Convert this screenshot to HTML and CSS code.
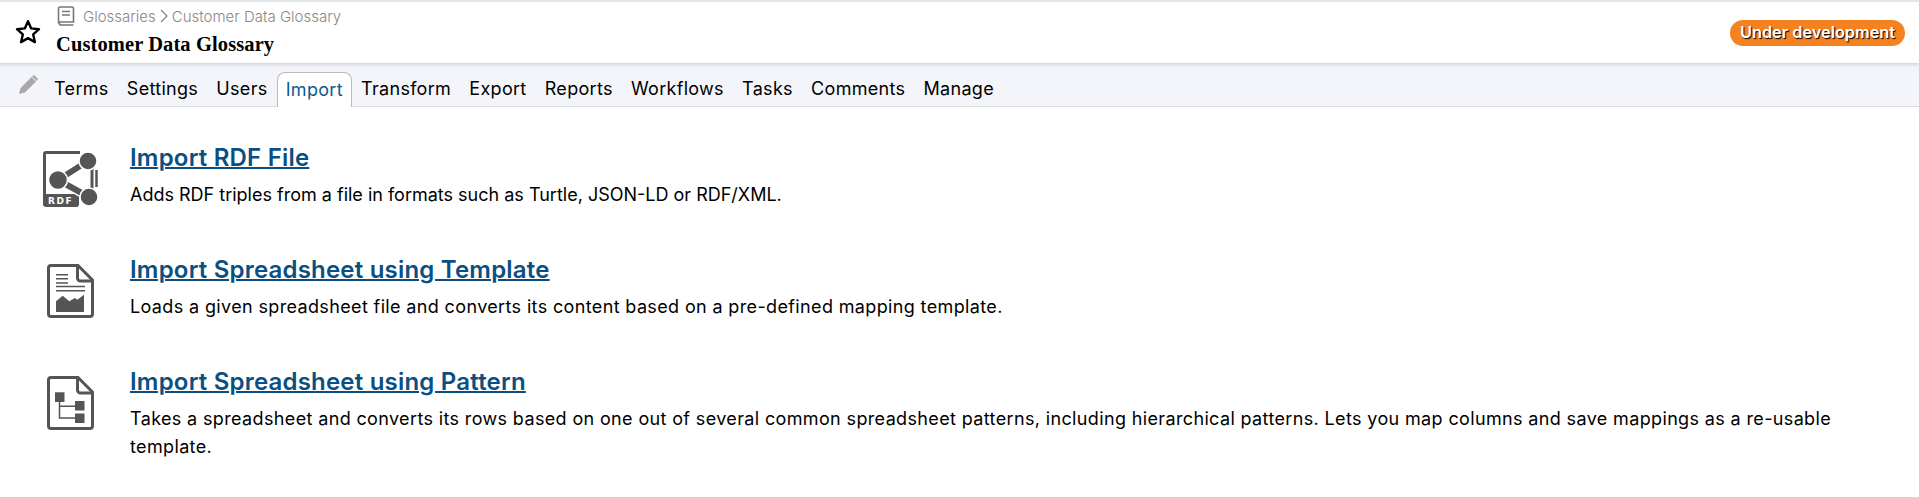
FILE: index.html
```html
<!DOCTYPE html>
<html lang="en">
<head>
  <meta charset="UTF-8" />
  <title>Customer Data Glossary - Import</title>
  <link rel="stylesheet" href="styles.css">
</head>
<body>
  <header class="page-header">
    <div class="star-box">
      <svg width="28" height="28" viewBox="0 0 28 28"><path d="M14 3.200l3.200 7.200 7.800.8-5.800 5.200 1.700 7.700L14 20.100l-6.900 4 1.700-7.700L3 11.200l7.800-.8z" fill="none" stroke="#000" stroke-width="2.400" stroke-linejoin="round"/></svg>
    </div>
    <div class="title-box">
      <div class="crumbs">
        <svg class="book" width="18" height="20" viewBox="0 0 18 20"><path d="M3 1h12a1.500 1.500 0 0 1 1.500 1.500V16H3.200a1.800 1.800 0 0 0 0 3h13.300M1.500 17.500V2.500A1.500 1.500 0 0 1 3 1M5 5.500h8M5 9h8" fill="none" stroke="#777" stroke-width="1.600"/></svg>
        <span>Glossaries</span>
        <svg class="chev" width="8" height="14" viewBox="0 0 8 14"><path d="M1 1l6 6-6 6" fill="none" stroke="#888" stroke-width="1.300"/></svg>
        <span>Customer Data Glossary</span>
      </div>
      <h1>Customer Data Glossary</h1>
    </div>
    <span class="status-badge">Under development</span>
  </header>

  <nav class="tab-bar">
    <svg class="pencil" width="22" height="22" viewBox="0 0 22 22"><path d="M2 20l1.500-6L14.500 3l4.500 4.500L8 18.500zM15.800 1.800a1.500 1.500 0 0 1 2.100 0l2.300 2.300a1.500 1.500 0 0 1 0 2.100l-.7.7-4.400-4.400z" fill="#a9a9a9"/></svg>
    <a class="tab">Terms</a>
    <a class="tab">Settings</a>
    <a class="tab">Users</a>
    <a class="tab active">Import</a>
    <a class="tab">Transform</a>
    <a class="tab">Export</a>
    <a class="tab">Reports</a>
    <a class="tab">Workflows</a>
    <a class="tab">Tasks</a>
    <a class="tab">Comments</a>
    <a class="tab">Manage</a>
  </nav>

  <main class="import-list">
    <section class="import-item">
      <svg class="item-icon" width="60" height="60" viewBox="0 0 60 60">
        <path d="M40 4.500H6a1.500 1.500 0 0 0-1.500 1.500v50A1.500 1.500 0 0 0 6 57.500h32" fill="none" stroke="#555" stroke-width="3"/>
        <rect x="3" y="46" width="36" height="12" rx="1.500" fill="#555"/>
        <path d="M56.500 22v17" stroke="#555" stroke-width="2.500"/>
        <path d="M18 32L48 13M18 32L49 49" stroke="#fff" stroke-width="9"/>
        <path d="M18 32L48 13M18 32L49 49" stroke="#555" stroke-width="6"/>
        <path d="M52 14v34" stroke="#555" stroke-width="3"/>
        <circle cx="48" cy="13" r="9" fill="#555" stroke="#fff" stroke-width="1.500"/>
        <circle cx="18" cy="32" r="9.500" fill="#555" stroke="#fff" stroke-width="1.500"/>
        <circle cx="49" cy="49" r="9" fill="#555" stroke="#fff" stroke-width="1.500"/>
        <text x="8" y="56" class="rdf-label">RDF</text>
      </svg>
      <div>
        <h2><a>Import RDF File</a></h2>
        <p>Adds RDF triples from a file in formats such as Turtle, JSON-LD or RDF/XML.</p>
      </div>
    </section>
    <section class="import-item">
      <svg class="item-icon" width="60" height="60" viewBox="0 0 60 60">
        <path d="M11 5.500h27L52.500 20v34a2.500 2.500 0 0 1-2.500 2.500H11A2.500 2.500 0 0 1 8.500 54V8A2.500 2.500 0 0 1 11 5.500z" fill="none" stroke="#555" stroke-width="3"/>
        <path d="M37.500 6v12a3 3 0 0 0 3 3H52" fill="none" stroke="#555" stroke-width="3"/>
        <path d="M16 14.700h12M16 18.700h12M16 23h12M16 26.500h29M16 30.700h29" stroke="#555" stroke-width="1.500"/>
        <path d="M16 41.300l6.700-5.600 6.600 5.600 5.700-3.300 2.300 1.700 6.700-5v17.300H16z" fill="#555"/>
      </svg>
      <div>
        <h2><a>Import Spreadsheet using Template</a></h2>
        <p class="wide">Loads a given spreadsheet file and converts its content based on a pre-defined mapping template.</p>
      </div>
    </section>
    <section class="import-item">
      <svg class="item-icon" width="60" height="60" viewBox="0 0 60 60">
        <path d="M11 5.500h27L52.500 20v34a2.500 2.500 0 0 1-2.500 2.500H11A2.500 2.500 0 0 1 8.500 54V8A2.500 2.500 0 0 1 11 5.500z" fill="none" stroke="#555" stroke-width="3"/>
        <path d="M37.500 6v12a3 3 0 0 0 3 3H52" fill="none" stroke="#555" stroke-width="3"/>
        <rect x="15" y="20.300" width="9.500" height="9.700" fill="#555"/>
        <rect x="35" y="29" width="9.500" height="9.500" fill="#555"/>
        <rect x="35" y="41.500" width="9.500" height="9.500" fill="#555"/>
        <path d="M19.500 30v16H35M19.500 34.300H35" fill="none" stroke="#555" stroke-width="1.500"/>
      </svg>
      <div>
        <h2><a>Import Spreadsheet using Pattern</a></h2>
        <p class="wide">Takes a spreadsheet and converts its rows based on one out of several common spreadsheet patterns, including hierarchical patterns. Lets you map columns and save mappings as a re-usable template.</p>
      </div>
    </section>
  </main>
</body>
</html>
```

FILE: styles.css
```css
body {
  margin: 0;
  background: #fff;
  color: #000;
  font-family: Inter, 'Liberation Sans', sans-serif;
  font-weight: 400;
}
.page-header {
  display: flex;
  align-items: flex-start;
  height: 61px;
  border-top: 2px solid #e6e6e6;
  box-shadow: 0 1px 4px rgba(0, 0, 0, 0.2);
  position: relative;
}
.star-box {
  padding: 16px 0 0 14px;
  width: 42px;
}
.title-box {
  flex: 1;
}
.crumbs {
  display: flex;
  align-items: center;
  gap: 4px;
  height: 26px;
  margin-top: 1px;
  font-size: 15px;
  font-weight: 300;
  color: #888;
}
.book {
  margin: 0 4px 0 1px;
}
h1 {
  margin: 3px 0 0;
  font-family: 'Liberation Serif', serif;
  font-size: 20.500px;
  font-weight: bold;
  letter-spacing: 0.1px;
  line-height: 24px;
}
.status-badge {
  margin: 18px 14px 0 0;
  padding: 0 10px;
  height: 26px;
  line-height: 25px;
  border-radius: 13px;
  background: #f58220;
  color: #fff;
  font-size: 16.300px;
  font-weight: 600;
  text-shadow: 1px 1px 1px #000;
}
.tab-bar {
  display: flex;
  align-items: flex-end;
  height: 43px;
  background: #f3f5fa;
  border-bottom: 1px solid #d8dbe0;
  padding-left: 17px;
}
.pencil {
  margin: 0 6px 10px 0;
}
.tab {
  padding: 0 8.100px;
  height: 34px;
  line-height: 33px;
  font-size: 18px;
  letter-spacing: 0.3px;
  border: 1px solid transparent;
  border-bottom: 0;
}
.tab.active {
  color: #0b5a8c;
  background: #fff;
  border-color: #bbb;
  border-radius: 8px 8px 0 0;
  margin-bottom: -1px;
}
.import-list {
  padding: 36px 0 0 40px;
}
.import-item {
  display: flex;
  gap: 30px;
  height: 112px;
}
.item-icon {
  flex: none;
  margin-top: 5px;
}
.rdf-label {
  font-family: 'DejaVu Sans', sans-serif;
  font-size: 9px;
  font-weight: bold;
  fill: #fff;
  letter-spacing: 1.500px;
}
h2 {
  margin: 0;
  font-size: 24px;
  font-weight: 600;
  letter-spacing: 0.2px;
  line-height: 30px;
  color: #0b4f82;
  text-decoration: underline;
  text-decoration-thickness: 2px;
}
p {
  margin: 8px 0 0;
  font-size: 18px;
  line-height: 28px;
  width: 1720px;
}
p.wide {
  letter-spacing: 0.36px;
}
```
